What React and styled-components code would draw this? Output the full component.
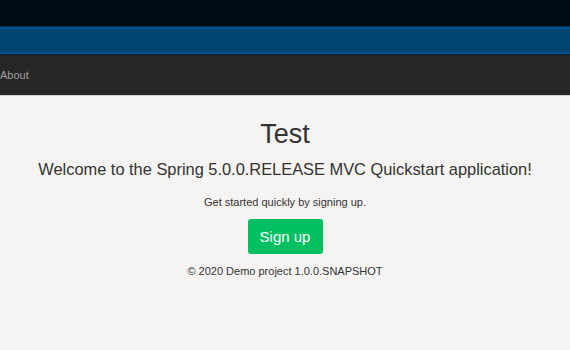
import React from "react";
import styled, { createGlobalStyle } from "styled-components";

const Global = createGlobalStyle`
  html, body { margin: 0; padding: 0; background: #f5f4f2; }
  body { font-family: "Liberation Sans", Arial, sans-serif; color: #333; }
`;

const TopBar = styled.div`
  height: 26px;
  background: #000a14;
`;

const BlueBand = styled.div`
  height: 24px;
  background: #004670;
  border-top: 1px solid #003458;
  box-shadow: inset 0 2px 0 #005590, inset 0 -2px 0 #005590;
  border-bottom: 1px solid #0f2230;
  padding-top: 2px;
  padding-bottom: 1px;
`;

const NavBar = styled.nav`
  height: 40px;
  background: #262626;
  border-bottom: 1px solid #cfcfcf;
  display: flex;
  align-items: center;
`;

const NavLink = styled.a`
  color: #a0a0a0;
  font-size: 11px;
  text-decoration: none;
  margin-top: -1px;
`;

const Main = styled.main`
  display: flex;
  flex-direction: column;
  align-items: center;
  padding-top: 22px;
`;

const Title = styled.h1`
  margin: 0;
  font-size: 27px;
  font-weight: normal;
  color: #333;
  line-height: 32px;
`;

const Lead = styled.p`
  margin: 7px 0 0;
  font-size: 16.4px;
  color: #333;
  line-height: 24px;
`;

const Small = styled.p`
  margin: ${(p) => p.$mt}px 0 0;
  font-size: 11px;
  color: #333;
  line-height: 14px;
`;

const Button = styled.button`
  margin-top: 10px;
  width: 75px;
  height: 35px;
  border: none;
  border-radius: 3px;
  background: #00c062;
  color: #fff;
  font-family: inherit;
  font-size: 15px;
`;

export default function App() {
  return (
    <>
      <Global />
      <TopBar />
      <BlueBand />
      <NavBar>
        <NavLink href="#">About</NavLink>
      </NavBar>
      <Main>
        <Title>Test</Title>
        <Lead>Welcome to the Spring 5.0.0.RELEASE MVC Quickstart application!</Lead>
        <Small $mt={14}>Get started quickly by signing up.</Small>
        <Button>Sign up</Button>
        <Small $mt={10}>© 2020 Demo project 1.0.0.SNAPSHOT</Small>
      </Main>
    </>
  );
}
